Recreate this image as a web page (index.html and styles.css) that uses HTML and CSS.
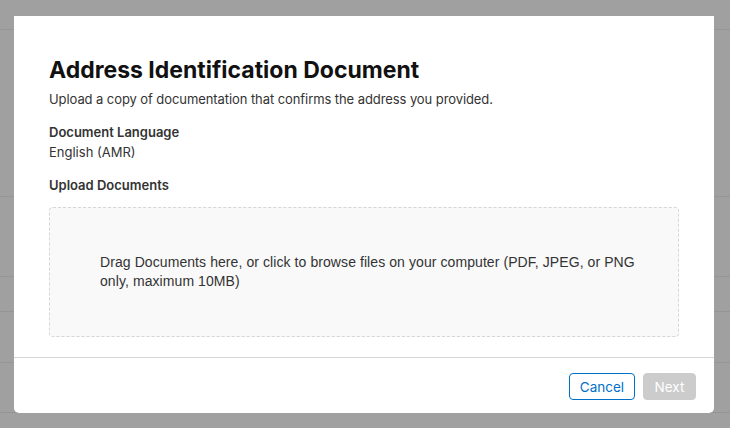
FILE: index.html
```html
<!DOCTYPE html>
<html>
<head>
<meta charset="utf-8">
<link rel="stylesheet" href="styles.css">
</head>
<body>
<div class="page">
  <div class="row r1"></div>
  <div class="row r2"></div>
  <div class="row r3"></div>
  <div class="row r4"></div>
  <div class="row r5"></div>
  <div class="row r6"></div>
</div>
<div class="modal">
  <div class="modal-body">
    <h1 class="title">Address Identification Document</h1>
    <p class="subtitle">Upload a copy of documentation that confirms the address you provided.</p>
    <div class="field">
      <div class="label">Document Language</div>
      <div class="value">English (AMR)</div>
    </div>
    <div class="label upload-label">Upload Documents</div>
    <div class="dropzone">
      <p class="drop-text">Drag Documents here, or click to browse files on your computer (PDF, JPEG, or PNG only, maximum 10MB)</p>
    </div>
  </div>
  <div class="modal-footer">
    <button class="btn btn-cancel">Cancel</button>
    <button class="btn btn-next" disabled>Next</button>
  </div>
</div>
</body>
</html>
```
FILE: styles.css
```css
html, body {
  margin: 0;
  padding: 0;
}
body {
  width: 730px;
  height: 428px;
  background: #a0a0a0;
  overflow: hidden;
  font-family: Inter, "Noto Sans", sans-serif;
  color: #1d1d1f;
}
.page {
  display: flex;
  flex-direction: column;
}
.row {
  border-bottom: 1px solid #959595;
}
.r1 { height: 29px; }
.r2 { height: 166px; }
.r3 { height: 79px; }
.r4 { height: 34px; }
.r5 { height: 50px; }
.r6 { height: 49px; }

.modal {
  position: absolute;
  left: 14px;
  top: 16px;
  width: 700px;
  height: 397px;
  background: #fff;
  border-radius: 0 0 5px 5px;
  display: flex;
  flex-direction: column;
}
.modal-body {
  flex: 1;
  padding: 40px 35px 0 35px;
}
.title {
  margin: 0;
  font-size: 23px;
  font-weight: 700;
  line-height: 28px;
  letter-spacing: 0;
  color: #111;
}
.subtitle {
  margin: 6px 0 0;
  font-size: 13px;
  line-height: 18px;
  letter-spacing: -0.08px;
  color: #333;
}
.field {
  margin-top: 14px;
}
.label {
  font-size: 13px;
  font-weight: 600;
  line-height: 20px;
  color: #333;
}
.value {
  font-size: 13px;
  line-height: 20px;
  color: #333;
}
.upload-label {
  margin-top: 13px;
}
.dropzone {
  margin-top: 12px;
  height: 128px;
  background: #f9f9f9;
  border: 1px dashed #d6d6d6;
  border-radius: 4px;
  display: flex;
  align-items: center;
  padding: 0 40px 0 50px;
}
.drop-text {
  margin: 0;
  font-family: "Liberation Sans", Arial, sans-serif;
  font-size: 14px;
  line-height: 19px;
  letter-spacing: 0.08px;
  color: #333;
  max-width: 556px;
}
.modal-footer {
  height: 56px;
  border-top: 1px solid #d6d6d6;
  display: flex;
  justify-content: flex-end;
  align-items: flex-start;
  gap: 8px;
  padding: 15px 18px 0 0;
  box-sizing: border-box;
}
.btn {
  height: 27px;
  border-radius: 4px;
  font-family: Inter, "Noto Sans", sans-serif;
  font-size: 13.5px;
  padding: 0;
  box-sizing: border-box;
}
.btn-cancel {
  width: 66px;
  background: #fff;
  border: 1px solid #0070c9;
  color: #0070c9;
}
.btn-next {
  width: 53px;
  background: #cccccc;
  border: 1px solid #cccccc;
  color: #fff;
}
```
